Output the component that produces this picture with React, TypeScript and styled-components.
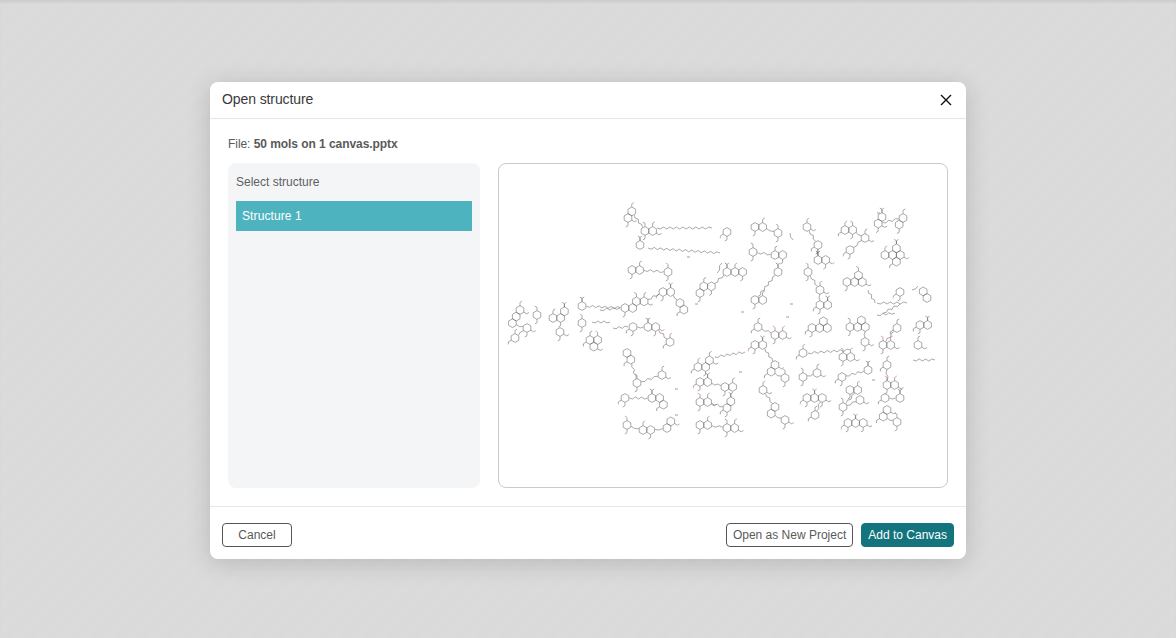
import React from "react";
import styled, { createGlobalStyle } from "styled-components";

const Global = createGlobalStyle`
  html, body { margin: 0; padding: 0; height: 100%; }
  #root { height: 100%; }
  body { font-family: "Liberation Sans", Arial, sans-serif; }
`;

const Backdrop = styled.div`
  box-sizing: border-box;
  height: 638px;
  padding-top: 3px;
  display: flex;
  align-items: center;
  justify-content: center;
  overflow: hidden;
  background: repeating-linear-gradient(-45deg, #dbdbdb 0 8px, #dadada 8px 16px);
  box-shadow: inset 0 3px 3px -1px rgba(0, 0, 0, 0.07);
`;

const Dialog = styled.div`
  width: 756px;
  height: 477px;
  display: flex;
  flex-direction: column;
  background: #fff;
  border-radius: 8px;
  box-shadow: 0 4px 24px rgba(0, 0, 0, 0.16);
`;

const Header = styled.header`
  box-sizing: border-box;
  flex: none;
  height: 37px;
  padding: 0 12px 1px;
  display: flex;
  align-items: center;
  justify-content: space-between;
  border-bottom: 1px solid #e2e5ea;
`;

const Title = styled.h2`
  margin: 0 0 2px;
  font-size: 14px;
  line-height: 16px;
  font-weight: 400;
  letter-spacing: -0.1px;
  color: #3a3a3a;
`;

const CloseButton = styled.button`
  width: 16px;
  height: 16px;
  padding: 0;
  margin-top: 1px;
  border: 0;
  background: none;
  color: #111;
  display: flex;
  align-items: center;
  justify-content: center;
`;

const Body = styled.div`
  flex: 1;
  min-height: 0;
  padding: 18px;
  display: flex;
  flex-direction: column;
  gap: 12px;
`;

const FileLine = styled.div`
  font-size: 12px;
  line-height: 14px;
  letter-spacing: -0.06px;
  color: #5a5a5a;
  b { font-weight: 700; }
`;

const Columns = styled.div`
  flex: 1;
  min-height: 0;
  display: flex;
  gap: 18px;
`;

const ListPanel = styled.aside`
  box-sizing: border-box;
  flex: none;
  width: 252px;
  padding: 12px 8px;
  background: #f4f5f7;
  border-radius: 8px;
  display: flex;
  flex-direction: column;
  gap: 12px;
`;

const ListTitle = styled.div`
  font-size: 12px;
  line-height: 14px;
  color: #5f5f5f;
`;

const ListItem = styled.div`
  height: 30px;
  padding: 0 6px 1px;
  box-sizing: border-box;
  display: flex;
  align-items: center;
  background: #4db3bf;
  color: #fff;
  font-size: 12px;
  letter-spacing: 0.1px;
`;

const Preview = styled.div`
  flex: 1;
  min-width: 0;
  border: 1px solid #c3ccd3;
  border-radius: 8px;
  overflow: hidden;
  background: #fff;
  svg { display: block; width: 100%; height: 100%; }
`;

const Footer = styled.footer`
  box-sizing: border-box;
  flex: none;
  height: 53px;
  padding: 4px 12px 0;
  display: flex;
  align-items: center;
  justify-content: space-between;
  border-top: 1px solid #e4e6e9;
`;

const Actions = styled.div`
  display: flex;
  gap: 8px;
`;

const Button = styled.button<{ $primary?: boolean; $wide?: boolean }>`
  box-sizing: border-box;
  height: 24px;
  min-width: ${(p) => (p.$wide ? "70px" : "0")};
  padding: 0 6px;
  border: 1px solid ${(p) => (p.$primary ? "#14747e" : "#555")};
  border-radius: 4px;
  background: ${(p) => (p.$primary ? "#14747e" : "#fff")};
  color: ${(p) => (p.$primary ? "#fff" : "#5a5a5a")};
  font: 12px "Liberation Sans", Arial, sans-serif;
`;

type P = [number, number];
const R = 4.4;
const STEP = Math.sqrt(3) * R;

const rawMolecules: P[][] = [
  [[628, 218], [634, 212], [645, 231], [652, 227]],
  [[727, 232]],
  [[640, 245]],
  [[632, 270], [645, 270], [668, 272]],
  [[735, 272], [742, 273]],
  [[582, 306], [625, 308], [635, 307], [638, 298], [647, 298], [663, 292], [672, 297], [680, 303], [683, 308]],
  [[582, 323]],
  [[520, 310], [520, 322], [510, 323], [527, 328], [515, 338]],
  [[537, 315]],
  [[553, 318], [562, 318], [570, 312]],
  [[560, 332]],
  [[590, 340], [598, 337], [590, 348]],
  [[633, 327], [648, 327], [657, 325], [670, 342]],
  [[700, 293], [708, 288], [717, 285], [727, 272]],
  [[755, 227], [763, 227], [778, 233]],
  [[807, 227], [818, 245], [818, 260], [828, 260]],
  [[845, 230], [857, 225], [865, 238], [850, 250]],
  [[882, 217], [880, 228], [903, 218], [902, 230]],
  [[885, 255], [895, 255], [895, 245], [903, 255], [900, 267]],
  [[753, 252], [775, 255], [785, 252]],
  [[778, 272], [755, 300], [767, 300]],
  [[808, 272], [820, 290], [820, 305], [830, 305]],
  [[847, 282], [857, 282], [857, 272], [865, 282]],
  [[900, 292]],
  [[927, 298], [921, 293]],
  [[758, 327], [775, 335], [785, 332]],
  [[812, 328], [822, 328], [822, 318], [831, 328]],
  [[850, 327], [860, 327], [860, 317], [868, 327], [865, 342]],
  [[897, 328], [883, 345], [893, 342]],
  [[920, 325], [927, 325]],
  [[627, 353], [631, 358], [637, 383], [662, 375]],
  [[625, 398], [652, 398], [660, 400], [668, 407]],
  [[627, 425], [643, 430], [655, 428], [667, 428], [675, 423]],
  [[698, 367], [707, 362], [715, 357]],
  [[700, 382], [710, 382], [725, 387], [737, 382]],
  [[700, 402], [710, 402], [727, 408], [737, 402]],
  [[700, 425], [710, 425], [727, 428], [738, 425]],
  [[755, 345], [760, 343], [775, 365], [775, 378], [785, 378]],
  [[763, 390], [775, 407], [775, 420], [785, 420]],
  [[803, 353]],
  [[803, 377], [817, 373]],
  [[807, 398], [817, 402], [827, 402], [815, 415]],
  [[843, 357], [852, 357]],
  [[842, 377], [868, 370]],
  [[850, 390], [858, 390], [843, 407], [860, 400]],
  [[848, 423], [860, 422], [868, 422]],
  [[887, 365], [887, 385], [897, 385]],
  [[885, 398], [900, 398]],
  [[887, 410], [882, 422], [897, 422]],
  [[918, 345]],
];

// Rings closer than a bond length are fused: snap them onto the hexagon lattice.
const molecules: P[][] = rawMolecules.map((m) => {
  const out: P[] = [m[0]];
  for (let i = 1; i < m.length; i++) {
    const prev = out[i - 1];
    const d = Math.hypot(m[i][0] - prev[0], m[i][1] - prev[1]);
    if (d < 14) {
      const raw = Math.atan2(m[i][1] - prev[1], m[i][0] - prev[0]);
      const a = (Math.round(raw / (Math.PI / 3)) * Math.PI) / 3;
      out.push([prev[0] + STEP * Math.cos(a), prev[1] + STEP * Math.sin(a)]);
    } else out.push(m[i]);
  }
  return out;
});

const chains: [number, number, number, number][] = [
  [657, 228, 712, 228],
  [648, 248, 720, 253],
  [600, 310, 620, 308],
  [592, 322, 610, 322],
  [613, 328, 628, 327],
  [808, 353, 850, 350],
  [715, 357, 745, 352],
  [877, 303, 907, 303],
  [877, 315, 895, 313],
  [868, 290, 875, 303],
  [913, 360, 935, 360],
  [912, 290, 918, 286],
  [717, 273, 722, 263],
  [883, 313, 900, 304],
  [790, 233, 793, 240],
];

const specks: P[] = [
  [687, 257], [675, 389], [786, 317], [739, 372], [741, 312], [877, 213], [675, 415], [872, 380], [790, 304], [695, 304],
];

const f = (n: number) => n.toFixed(1);

function hexPath([cx, cy]: P) {
  const pts = Array.from({ length: 6 }, (_, k) => {
    const a = (Math.PI / 3) * k + Math.PI / 6;
    return `${f(cx + R * Math.cos(a))} ${f(cy + R * Math.sin(a))}`;
  });
  return `M${pts.join("L")}Z`;
}

function bondPath(a: P, b: P, inset = R) {
  const dx = b[0] - a[0];
  const dy = b[1] - a[1];
  const d = Math.hypot(dx, dy);
  if (d <= 2 * inset) return "";
  const ux = dx / d;
  const uy = dy / d;
  const steps = Math.max(1, Math.round((d - 2 * inset) / 3.2));
  let s = `M${f(a[0] + ux * inset)} ${f(a[1] + uy * inset)}`;
  for (let k = 1; k <= steps; k++) {
    const t = inset + ((d - 2 * inset) * k) / steps;
    const off = k < steps ? (k % 2 ? 1 : -1) : 0;
    s += `L${f(a[0] + ux * t - uy * off)} ${f(a[1] + uy * t + ux * off)}`;
  }
  return s;
}

const Molecules = () => {
  const rings = molecules.flat();
  const bonds = molecules.flatMap((m) => m.slice(1).map((p, i) => bondPath(m[i], p))).join("");
  const lines = chains.map(([a, b, c, d]) => bondPath([a, b], [c, d], 0)).join("");

  const stubs: { d: string; tip: string; color: string }[] = [];
  rings.forEach((p, i) => {
    [i * 2, i * 3 + 1].forEach((v, j) => {
      const a = (Math.PI / 3) * (v % 6) + Math.PI / 6;
      const x1 = p[0] + R * Math.cos(a);
      const y1 = p[1] + R * Math.sin(a);
      const ox = x1 + 3.2 * Math.cos(a);
      const oy = y1 + 3.2 * Math.sin(a);
      const free = rings.every((q) => q === p || Math.hypot(q[0] - ox, q[1] - oy) > R + 1);
      if (!free) return;
      const b = a + (j ? 1 : -1);
      const n = i * 7 + j;
      stubs.push({
        d: `M${f(x1)} ${f(y1)}L${f(ox)} ${f(oy)}`,
        tip: `M${f(ox)} ${f(oy)}l${f(2.6 * Math.cos(b))} ${f(2.6 * Math.sin(b))}`,
        color: n % 4 === 0 ? "#e0606e" : n % 9 === 0 ? "#6670c8" : "#666",
      });
    });
  });

  return (
    <svg viewBox="499 164 448 323" aria-hidden="true">
      <g fill="none" stroke="#555" strokeWidth="0.5">
        {rings.map((p, i) => (
          <path key={i} d={hexPath(p)} />
        ))}
        <path d={bonds} />
        <path d={lines} />
        {stubs.map((s, i) => (
          <path key={i} d={s.d} />
        ))}
      </g>
      <g fill="none" strokeWidth="0.6">
        {stubs.map((s, i) => (
          <path key={i} d={s.tip} stroke={s.color} />
        ))}
      </g>
      <g stroke="#777" strokeWidth="0.7">
        {specks.map(([x, y], i) => (
          <path key={i} d={`M${x} ${y}h3`} />
        ))}
      </g>
    </svg>
  );
};

export default function App() {
  return (
    <>
      <Global />
      <Backdrop>
        <Dialog>
          <Header>
            <Title>Open structure</Title>
            <CloseButton aria-label="Close">
              <svg width="16" height="16" viewBox="0 0 16 16" fill="none" stroke="currentColor" strokeWidth="1.4">
                <path d="M3 3l10 10M13 3L3 13" />
              </svg>
            </CloseButton>
          </Header>
          <Body>
            <FileLine>
              File: <b>50 mols on 1 canvas.pptx</b>
            </FileLine>
            <Columns>
              <ListPanel>
                <ListTitle>Select structure</ListTitle>
                <ListItem>Structure 1</ListItem>
              </ListPanel>
              <Preview>
                <Molecules />
              </Preview>
            </Columns>
          </Body>
          <Footer>
            <Button $wide>Cancel</Button>
            <Actions>
              <Button>Open as New Project</Button>
              <Button $primary>Add to Canvas</Button>
            </Actions>
          </Footer>
        </Dialog>
      </Backdrop>
    </>
  );
}
